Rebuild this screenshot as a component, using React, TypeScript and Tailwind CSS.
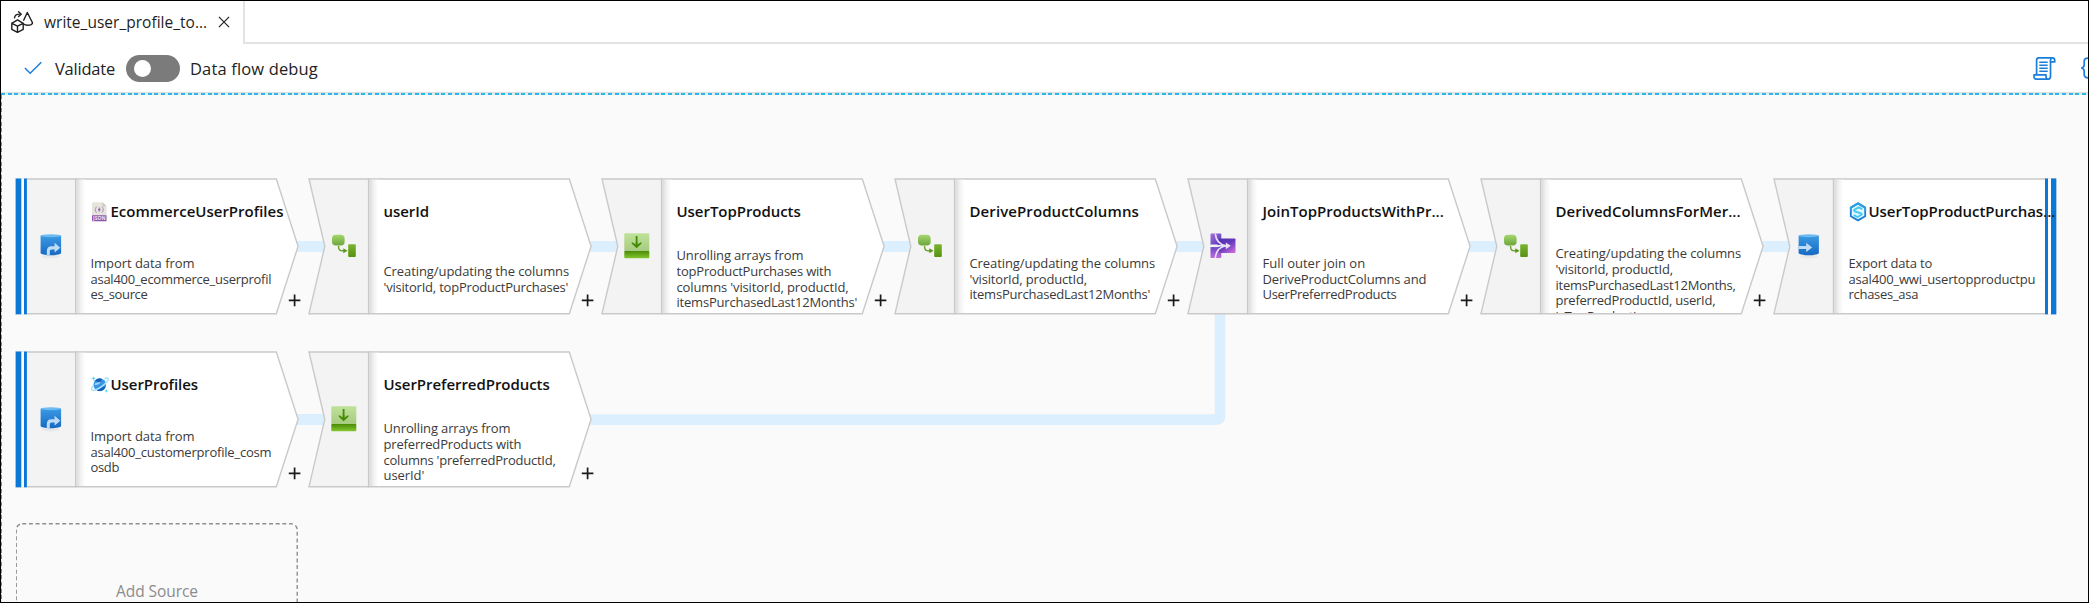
import type { ReactNode } from 'react';

type Line = [text: string, tracking: string];

type StepKind = 'source' | 'step' | 'sink';

interface Step {
  kind: StepKind;
  rail: ReactNode;
  badge?: ReactNode;
  title: Line;
  lines: Line[];
  linked?: boolean;
}

function SourceIcon() {
  return (
    <svg className="h-[26px] w-[26px]" viewBox="0 0 26 26">
      <defs>
        <linearGradient id="cyl" x1="0" y1="0" x2="0" y2="1">
          <stop offset="0" stopColor="#3b9ae3" />
          <stop offset="1" stopColor="#1668c2" />
        </linearGradient>
      </defs>
      <ellipse cx="13" cy="23.6" rx="9" ry="1.8" fill="#e6e8eb" />
      <path d="M2.6 2.800v17.300c0 1.100 4.600 2.200 10.300 2.200s10.200-1.100 10.200-2.200V2.800z" fill="url(#cyl)" />
      <ellipse cx="12.850" cy="2.800" rx="10.250" ry="1.500" fill="#6db9f2" />
      <path d="M8.800 21.900v-3.400c0-3.400 1.600-5.200 4.600-5.200h3.200V9.800l5.700 4.900-5.700 4.900v-3.200h-2.800c-1.400 0-2 .8-2 2.200v3.600c-1 0-2-.1-3-.3z" fill="#bfdcf7" />
    </svg>
  );
}

function SinkIcon() {
  return (
    <svg className="h-[26px] w-[26px]" viewBox="0 0 26 26">
      <ellipse cx="13" cy="23.6" rx="9" ry="1.8" fill="#e6e8eb" />
      <path d="M2.600 2.800v17.300c0 1.100 4.600 2.200 10.300 2.200s10-1.100 10-2.200V2.800z" fill="url(#cyl)" />
      <ellipse cx="12.750" cy="2.800" rx="10.150" ry="1.500" fill="#6db9f2" />
      <path d="M2.600 12.900h7.600V9.700l6 4.700-6 4.700v-3.200H2.600z" fill="#bfdcf7" />
    </svg>
  );
}

function DeriveIcon() {
  return (
    <svg className="h-[26px] w-[26px]" viewBox="0 0 26 26">
      <defs>
        <linearGradient id="leafA" x1="0" y1="0" x2="0" y2="1">
          <stop offset="0" stopColor="#a5d76d" />
          <stop offset="1" stopColor="#6ba53c" />
        </linearGradient>
        <linearGradient id="leafB" x1="0" y1="0" x2="0" y2="1">
          <stop offset="0" stopColor="#79b52f" />
          <stop offset="1" stopColor="#57910f" />
        </linearGradient>
      </defs>
      <rect x="1" y="1.800" width="12.600" height="10.800" rx="3.800" fill="url(#leafA)" />
      <path d="M7.600 13v1c0 2.500 1.500 3.800 3.900 3.800h2" fill="none" stroke="#6ba52c" strokeWidth="1.400" />
      <path d="M12.300 15.200l4.300 2.600-4.300 2.500z" fill="#5c971b" />
      <rect x="17.200" y="11.200" width="7.600" height="12.800" rx="1" fill="url(#leafB)" />
    </svg>
  );
}

function FlattenIcon() {
  return (
    <svg className="h-[26px] w-[26px]" viewBox="0 0 26 26">
      <defs>
        <linearGradient id="tray" x1="0" y1="0" x2="0" y2="1">
          <stop offset="0" stopColor="#bfe29a" />
          <stop offset="1" stopColor="#a6cb80" />
        </linearGradient>
        <linearGradient id="trayBase" x1="0" y1="0" x2="0" y2="1">
          <stop offset="0" stopColor="#4a8a06" />
          <stop offset="1" stopColor="#83c730" />
        </linearGradient>
      </defs>
      <rect x="0.300" y="0.300" width="25" height="18" rx="0.800" fill="url(#tray)" />
      <rect x="0.300" y="18" width="25" height="7.200" rx="0.800" fill="url(#trayBase)" />
      <path d="M12.600 3v8" stroke="#448a05" strokeWidth="1.800" />
      <path d="M7.800 9l4 2.400V9h1.600v2.400l4-2.400v1.800l-4.800 4.400-4.800-4.400z" fill="#448a05" />
    </svg>
  );
}

function JoinIcon() {
  return (
    <svg className="h-[26px] w-[26px]" viewBox="0 0 26 26">
      <defs>
        <linearGradient id="joinFill" x1="0" y1="0" x2="0.800" y2="1">
          <stop offset="0" stopColor="#4f2fb5" />
          <stop offset="0.500" stopColor="#6439b9" />
          <stop offset="1" stopColor="#c468d8" />
        </linearGradient>
        <linearGradient id="joinTop" x1="0" y1="0" x2="1" y2="1">
          <stop offset="0" stopColor="#a070dd" />
          <stop offset="1" stopColor="#5533b4" />
        </linearGradient>
        <linearGradient id="joinLow" x1="0" y1="0" x2="0" y2="1">
          <stop offset="0" stopColor="#6b45c4" />
          <stop offset="1" stopColor="#c06ddd" />
        </linearGradient>
      </defs>
      <path d="M1.300.6h9.200a.8.8 0 0 1 .8.8V12H.5V1.400a.8.8 0 0 1 .8-.8z" fill="url(#joinTop)" />
      <path d="M.5 14h10.800v10.200a.8.8 0 0 1-.8.8H1.300a.8.8 0 0 1-.8-.8z" fill="url(#joinLow)" />
      <path d="M9 5.500h15.600a.9.9 0 0 1 .9.900V19a.9.900 0 0 1-.9.900H9z" fill="url(#joinFill)" />
      <path d="M.5 12.800h7" stroke="#f3f3f3" strokeWidth="2.600" />
      <path d="M7 12.800h11" stroke="#e9e0f8" strokeWidth="1.800" />
      <path d="M5.300.6c.6 6.800 4.300 11 10.700 12.200-6.400 1.200-10.100 5.400-10.700 12.200" fill="none" stroke="#e9e0f8" strokeWidth="1.600" />
      <path d="M15.800 9.400l5 3.400-5 3.400z" fill="#e9e0f8" />
    </svg>
  );
}

function JsonIcon() {
  return (
    <svg className="h-[20px] w-[17px] shrink-0" viewBox="0 0 17 20">
      <path d="M1.800.3h9.700l4 4v15H1.800a.8.8 0 0 1-.8-.8V1.100a.8.8 0 0 1 .8-.8z" fill="#e6e5dc" />
      <path d="M11.500.3l4 4h-4z" fill="#c9c8bd" />
      <rect x="1" y="13.300" width="14.500" height="6" rx="0.500" fill="#8f58ae" />
      <path d="M5.800 4.900c-1 0-1.100.5-1.100 1.300s-.2 1.300-.9 1.400c.7.100.9.600.9 1.400s.100 1.300 1.100 1.300M10.700 4.900c1 0 1.100.5 1.100 1.300s.2 1.300.9 1.400c-.7.100-.9.600-.9 1.400s-.1 1.300-1.100 1.300" fill="none" stroke="#a884c0" strokeWidth="0.900" />
      <path d="M8.250 5.600v4M7 7.600h2.500" stroke="#8f58ae" strokeWidth="1" />
      <text x="8.250" y="18.200" textAnchor="middle" fill="#eee3f5" className="font-['Open_Sans'] text-[5px] font-bold">JSON</text>
    </svg>
  );
}

function CosmosIcon() {
  return (
    <svg className="h-[18px] w-[18px] shrink-0" viewBox="0 0 18 18">
      <circle cx="8.800" cy="8.800" r="6.400" fill="#3a96e4" />
      <path d="M3.500 5.500c1.800-.6 3.300.8 5.200.3 1.600-.5 1.500-1.800 2.500-2.900A6.400 6.400 0 0 0 3.500 5.500zM6 14.400c.5-2 2.600-1.900 4-3.200 1.200-1 2.800-.8 4.700-.6A6.300 6.300 0 0 1 6 14.400z" fill="#1560b8" />
      <path d="M4.500 6.800c1.600.5 2.800-.9 4.200-.9.900 0 .2 1.700-.9 2.200-1.500.7-2.800 1.300-4.300.8z" fill="#9bd6fa" />
      <path d="M2.600 9.400C.6 11.500 0 13 .8 13.800c1.300 1.300 6.200-.6 10.500-3.700 4.300-3.200 6.800-6.600 5.700-7.700-.5-.6-1.900-.4-3.600.4" fill="none" stroke="#a5e4fa" strokeWidth="1.500" />
      <path d="M2.600.2l.7 1.600 1.600.7-1.600.7-.7 1.600-.7-1.600-1.600-.7 1.600-.7zM15.300 13l.6 1.400 1.400.6-1.400.6-.6 1.400-.6-1.400-1.400-.6 1.400-.6z" fill="#5fd6f5" />
    </svg>
  );
}

function SynapseIcon() {
  return (
    <svg className="h-[20px] w-[18px] shrink-0" viewBox="0 0 18 20">
      <path d="M9 1.400l7.200 4.200v8.600L9 18.400l-7.200-4.200V5.600z" fill="#e2f6fd" stroke="#1b7fd6" strokeWidth="1.800" strokeLinejoin="round" />
      <path d="M1.800 9V5.600L9 1.400l7.200 4.200V9" fill="none" stroke="#2c9fe4" strokeWidth="1.800" strokeLinejoin="round" />
      <path d="M13.200 7.200L9.800 5.300 5.600 7.600c-.7.500-.6 1.300.2 1.700l6.100 2c1 .4 1 1.200.2 1.700L8.500 15l-3.700-2" fill="none" stroke="#3fc9f5" strokeWidth="1.900" />
    </svg>
  );
}

function PlusMark() {
  return <path d="M278.600 116.600v11.600M272.800 122.400h11.600" stroke="#1a1a1a" strokeWidth="1.700" fill="none" />;
}

function Shape({ kind, linked }: { kind: StepKind; linked?: boolean }) {
  const edge = { stroke: '#c9c9c9', strokeWidth: 1.4, strokeLinejoin: 'miter' as const };
  const rail = kind === 'source' ? '0,1 59.800,1 59.800,135.700 0,135.700' : '0,1 59.600,1 59.600,135.700 0,135.700 15.800,68.300';
  const card = kind === 'sink' ? '59.600,1 281.500,1 281.500,135.700 59.600,135.700' : '59.700,1 260.300,1 282.100,68.300 260.300,135.700 59.700,135.700';
  return (
    <svg className="h-[137px] w-[293px] overflow-visible [grid-area:1/1]" viewBox="0 0 293 137">
      {linked && <rect x="270" y="63" width="40" height="11" fill="#dceffe" />}
      <polygon points={rail} fill="#f3f3f3" {...edge} />
      <polygon points={card} fill="#fff" {...edge} />
      <rect x="60.300" y="1.700" width="9" height="133.300" fill="url(#fold)" />
      {kind === 'source' && (
        <g>
          <rect x="-0.300" y="0.500" width="11" height="135.800" fill="#fff" />
          <rect x="-0.300" y="0.500" width="5.600" height="135.800" fill="#0b78d7" />
          <rect x="8" y="0.500" width="2.900" height="135.800" fill="#0b78d7" />
        </g>
      )}
      {kind === 'sink' && (
        <g>
          <rect x="271" y="0.500" width="3" height="135.800" fill="#0b78d7" />
          <rect x="274" y="0.500" width="3" height="135.800" fill="#fff" />
          <rect x="277" y="0.500" width="5.300" height="135.800" fill="#0b78d7" />
        </g>
      )}
      {kind !== 'sink' && <PlusMark />}
    </svg>
  );
}

function StepCard({ step }: { step: Step }) {
  return (
    <div className="grid w-[293px] shrink-0">
      <Shape kind={step.kind} linked={step.linked} />
      <div className="z-10 flex h-[136px] [grid-area:1/1]">
        <div className="flex w-[74.500px] shrink-0 items-center pl-[22px]">{step.rail}</div>
        <div className="flex h-[135px] flex-col pt-[23px]">
          <div className="flex h-[21px] items-center">
            {step.badge && <div className="flex w-5 shrink-0 items-center">{step.badge}</div>}
            <h2 className={`text-[15px] leading-[21px] font-semibold whitespace-pre text-[#111] ${step.title[1]}`}>{step.title[0]}</h2>
          </div>
          <div className="mt-[24px] flex h-[67px] flex-col overflow-hidden">
            <div className="my-auto">
              {step.lines.map(([text, tracking]) => (
                <p key={text} className={`text-[13px] leading-[15.800px] whitespace-pre text-[#3a3a3a] ${tracking}`}>{text}</p>
              ))}
            </div>
          </div>
        </div>
      </div>
    </div>
  );
}

const topRow: Step[] = [
  {
    kind: 'source', rail: <SourceIcon />, badge: <JsonIcon />, linked: true,
    title: ['EcommerceUserProfiles', 'tracking-[0px]'],
    lines: [['Import data from', 'tracking-[-0.045px]'], ['asal400_ecommerce_userprofil', 'tracking-[-0.259px]'], ['es_source', 'tracking-[-0.34px]']],
  },
  {
    kind: 'step', rail: <DeriveIcon />, linked: true,
    title: ['userId', 'tracking-[-0.045px]'],
    lines: [['Creating/updating the columns', 'tracking-[-0.081px]'], ["'visitorId, topProductPurchases'", 'tracking-[-0.212px]']],
  },
  {
    kind: 'step', rail: <FlattenIcon />, linked: true,
    title: ['UserTopProducts', 'tracking-[-0.045px]'],
    lines: [['Unrolling arrays from', 'tracking-[-0.125px]'], ['topProductPurchases with', 'tracking-[-0.206px]'], ["columns 'visitorId, productId,", 'tracking-[-0.132px]'], ["itemsPurchasedLast12Months'", 'tracking-[-0.208px]']],
  },
  {
    kind: 'step', rail: <DeriveIcon />, linked: true,
    title: ['DeriveProductColumns', 'tracking-[0.092px]'],
    lines: [['Creating/updating the columns', 'tracking-[-0.081px]'], ["'visitorId, productId,", 'tracking-[-0.16px]'], ["itemsPurchasedLast12Months'", 'tracking-[-0.208px]']],
  },
  {
    kind: 'step', rail: <JoinIcon />, linked: true,
    title: ['JoinTopProductsWithPr...', 'tracking-[0.03px]'],
    lines: [['Full outer join on', 'tracking-[0.006px]'], ['DeriveProductColumns and', 'tracking-[-0.126px]'], ['UserPreferredProducts', 'tracking-[-0.301px]']],
  },
  {
    kind: 'step', rail: <DeriveIcon />, linked: true,
    title: ['DerivedColumnsForMer...', 'tracking-[0.019px]'],
    lines: [['Creating/updating the columns', 'tracking-[-0.081px]'], ["'visitorId, productId,", 'tracking-[-0.16px]'], ['itemsPurchasedLast12Months,', 'tracking-[-0.247px]'], ['preferredProductId, userId,', 'tracking-[-0.225px]'], ["isTopProduct'", 'tracking-[-0.2px]']],
  },
  {
    kind: 'sink', rail: <SinkIcon />, badge: <SynapseIcon />,
    title: ['UserTopProductPurchas...', 'tracking-[-0.059px]'],
    lines: [['Export data to', 'tracking-[-0.167px]'], ['asal400_wwi_usertopproductpu', 'tracking-[-0.187px]'], ['rchases_asa', 'tracking-[-0.284px]']],
  },
];

const bottomRow: Step[] = [
  {
    kind: 'source', rail: <SourceIcon />, badge: <CosmosIcon />, linked: true,
    title: ['UserProfiles', 'tracking-[-0.05px]'],
    lines: [['Import data from', 'tracking-[-0.045px]'], ['asal400_customerprofile_cosm', 'tracking-[-0.21px]'], ['osdb', 'tracking-[-0.323px]']],
  },
  {
    kind: 'step', rail: <FlattenIcon />,
    title: ['UserPreferredProducts', 'tracking-[-0.05px]'],
    lines: [['Unrolling arrays from', 'tracking-[-0.125px]'], ['preferredProducts with', 'tracking-[-0.163px]'], ["columns 'preferredProductId,", 'tracking-[-0.229px]'], ["userId'", 'tracking-[-0.061px]']],
  },
];

function TabBar() {
  return (
    <div className="flex h-[43px] shrink-0">
      <div className="flex w-[242px] shrink-0 items-start pl-[9px]">
        <svg className="mt-[10px] h-[22px] w-[24px]" viewBox="0 0 24 22" fill="none" stroke="#1f1f1f" strokeWidth="1.400" strokeLinejoin="round" strokeLinecap="round">
          <path d="M1.800 12.300l5.700-3.400 5.700 3.400v6.100l-5.700 3-5.700-3zM1.800 12.300l5.700 2.900 5.700-2.900M7.500 15.200v6.200" />
          <path d="M17.300 1.500l5.200 10.200c.3 1.500-2.200 2.500-4.800 2.500-1.700 0-3.200-.4-4.100-1.200M17.300 1.500l-3.600 7.700" />
          <path d="M4.500 6.800c.3-2.700 2.300-3.900 6.100-3.600M8.600.800l2.600 2.400-2.600 2.300" />
        </svg>
        <span className="ml-[10px] pt-[10px] text-[15.500px] leading-[22px] tracking-[0.020px] whitespace-pre text-[#1f1f1f]">write_user_profile_to...</span>
        <svg className="mt-[15px] ml-[11px] h-[12px] w-[12px]" viewBox="0 0 12 12" stroke="#222" strokeWidth="1.200">
          <path d="M.900.900l10.200 10.200M11.100.900L.900 11.100" />
        </svg>
      </div>
      <div className="flex-1 border-b-[2px] border-l-[2px] border-[#e3e3e3]" />
    </div>
  );
}

function Toolbar() {
  return (
    <div className="flex h-[48px] shrink-0 items-center overflow-hidden pl-[23px]">
      <svg className="h-[14px] w-[18px]" viewBox="0 0 18 14" fill="none" stroke="#1a7fdb" strokeWidth="1.500">
        <path d="M.9 7l5.300 5.300L17.300 1.200" />
      </svg>
      <span className="ml-[13px] pt-[1px] text-[16.500px] leading-[22px] tracking-[-0.220px] whitespace-pre text-[#222]">Validate</span>
      <div className="ml-[11px] flex h-[27px] w-[54px] items-center rounded-full bg-[#7b7b7b] pl-[8px]">
        <div className="h-[17px] w-[17px] rounded-full bg-white" />
      </div>
      <span className="ml-[10px] pt-[1px] text-[16.500px] leading-[22px] tracking-[0.150px] whitespace-pre text-[#222]">Data flow debug</span>
      <svg className="mr-[24px] ml-auto h-[23px] w-[23px] shrink-0" viewBox="0 0 23 23" fill="none" stroke="#1a7fdb" strokeWidth="1.700" strokeLinejoin="round">
        <path d="M3.600 17.700V3.300c0-1.500.8-2.400 2.200-2.400h13.300c1.600 0 2.600.9 2.600 2.400v1.600h-4.200V19.600c0 1.600-.8 2.600-2.200 2.600" />
        <path d="M17.500 4.900V3.300c0-1.400.5-2.200 1.600-2.400" />
        <path d="M3.300 22.200h12c-1.500 0-2.300-1-2.300-2.400v-1.900H1v1.900c0 1.500.9 2.400 2.300 2.400z" />
        <path d="M6.300 5.200h8.400M6.300 8.200h8.400M6.300 11.200h8.400M6.300 14.200h8.400" strokeWidth="1.400" />
      </svg>
      <svg className="h-[22px] w-[8px] shrink-0" viewBox="0 0 8 22" fill="none" stroke="#1a7fdb" strokeWidth="1.700">
        <path d="M8 1.200C5 1.200 4.200 2.300 4.200 4.500v3.300c0 2-.8 3-3 3.200 2.200.2 3 1.200 3 3.200v3.300c0 2.200.8 3.300 3.800 3.300" />
      </svg>
    </div>
  );
}

export default function App() {
  return (
    <div className="flex h-[603px] w-[2089px] flex-col overflow-hidden border border-black bg-white font-['Open_Sans','Noto_Sans',sans-serif]">
      <svg className="absolute h-0 w-0">
        <defs>
          <linearGradient id="fold" x1="0" y1="0" x2="1" y2="0">
            <stop offset="0" stopColor="#dadada" />
            <stop offset="0.500" stopColor="#f2f2f2" />
            <stop offset="1" stopColor="#ffffff" />
          </linearGradient>
        </defs>
      </svg>
      <TabBar />
      <Toolbar />
      <div className="h-px shrink-0 bg-[#e2dedc]" />
      <div className="h-[2px] shrink-0 bg-[repeating-linear-gradient(90deg,#2fb6e8_0_4px,#d5f0fa_4px_6.67px)]" />
      <div className="flex min-h-0 flex-1 bg-[#fafafa]">
        <div className="w-px shrink-0 bg-[repeating-linear-gradient(180deg,#36a8cc_0_4px,#d5f0fa_4px_6.67px)]" />
        <div className="relative flex flex-1 flex-col pt-[83px] pl-[14px]">
          <svg className="absolute top-[218px] left-[573px] h-[112px] w-[652px]" viewBox="0 0 652 112">
            <path d="M0 101.300h639.700V0h10.600v103c0 5.500-3.500 9-9 9H0z" fill="#dceffe" />
          </svg>
          <div className="relative flex h-[173px] shrink-0">
            {topRow.map((step) => <StepCard key={step.title[0]} step={step} />)}
          </div>
          <div className="relative flex h-[172px] shrink-0">
            {bottomRow.map((step) => <StepCard key={step.title[0]} step={step} />)}
          </div>
          <div className="grid w-[282px] shrink-0 justify-items-center">
            <svg className="h-[140px] w-[282px] [grid-area:1/1]" viewBox="0 0 282 140">
              <rect x="0.200" y="0.800" width="281" height="138" rx="6" fill="none" stroke="#8f8f8f" strokeWidth="1.400" strokeDasharray="4 2.670" />
            </svg>
            <span className="pt-[57px] text-[15.500px] leading-[22px] tracking-[-0.070px] text-[#8c8c8c] [grid-area:1/1]">Add Source</span>
          </div>
        </div>
      </div>
    </div>
  );
}
